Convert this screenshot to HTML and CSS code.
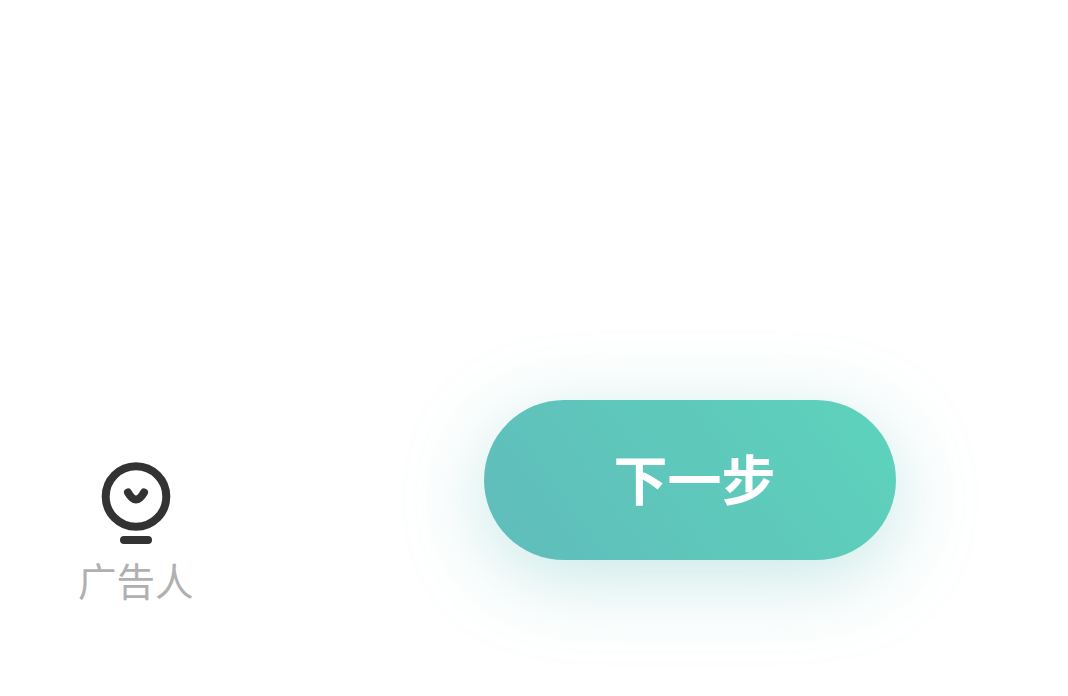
FILE: index.html
```html
<!DOCTYPE html>
<html lang="zh-CN">
<head>
    <meta charset="UTF-8">
    <meta name="viewport" content="width=device-width, initial-scale=1.0">
    <title>下一步</title>
    <link rel="stylesheet" href="styles.css">
</head>
<body>
    <div class="footer">
        <div class="tab">
            <svg class="tab-icon" width="70" height="84" viewBox="0 0 70 84">
                <circle cx="35" cy="34.500" r="30.300" fill="none" stroke="#333" stroke-width="8"/>
                <path d="M27 30.500 Q31 37.500 35 37.500 Q39 37.500 43 30.500" fill="none" stroke="#333" stroke-width="8" stroke-linecap="round" stroke-linejoin="round"/>
                <rect x="19" y="74" width="32" height="8" rx="4" fill="#333"/>
            </svg>
            <span class="tab-label">广告人</span>
        </div>
        <button class="next-btn">下一步</button>
    </div>
</body>
</html>
```

FILE: styles.css
```css
body {
    margin: 0;
    background: #fff;
    font-family: "Noto Sans CJK SC", "Liberation Sans", sans-serif;
    overflow: hidden;
}

.footer {
    display: flex;
    align-items: flex-start;
    justify-content: space-between;
    height: 296px;
    padding: 400px 172px 0 78px;
}

.tab {
    display: flex;
    flex-direction: column;
    align-items: center;
    margin-top: 62px;
}

.tab-icon {
    display: block;
    margin-left: 1px;
    margin-bottom: 13px;
}

.tab-label {
    font-size: 38.500px;
    font-weight: 400;
    line-height: 40px;
    color: #b0b0b0;
}

.next-btn {
    width: 412px;
    height: 160px;
    padding: 0 0 6px 9px;
    border: none;
    border-radius: 80px;
    font-family: inherit;
    font-size: 54px;
    font-weight: 700;
    color: #fff;
    background: linear-gradient(55deg, #60bcbb, #5dd3bb);
    box-shadow: 0 18px 80px rgba(96, 190, 185, 0.36);
}
```
